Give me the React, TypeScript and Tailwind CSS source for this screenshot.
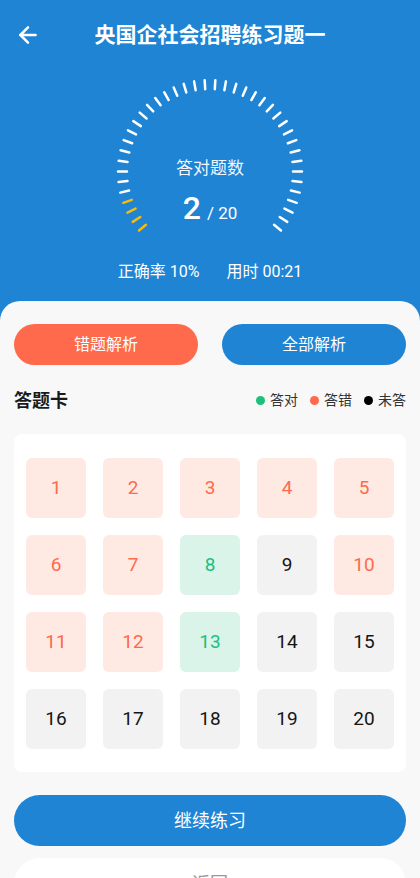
import { ArrowLeft } from 'lucide-react';

type CellState = 'wrong' | 'right' | 'none';

const cells: CellState[] = [
  'wrong', 'wrong', 'wrong', 'wrong', 'wrong',
  'wrong', 'wrong', 'right', 'none', 'wrong',
  'wrong', 'wrong', 'right', 'none', 'none',
  'none', 'none', 'none', 'none', 'none',
];

const cellStyle: Record<CellState, string> = {
  wrong: 'bg-[#fee9e3] text-[#ff6a4c]',
  right: 'bg-[#daf4ea] text-[#1cc07c]',
  none: 'bg-[#f2f2f2] text-[#151515]',
};

const Gauge = () => {
  const count = 40;
  const start = -129.5;
  const end = 129.5;
  const step = (end - start) / (count - 1);
  const cx = 100;
  const cy = 100;
  const ticks = Array.from({ length: count }, (_, i) => {
    const a = ((start + step * i) * Math.PI) / 180;
    const r1 = 83;
    const r2 = 92;
    return {
      x1: cx + r1 * Math.sin(a),
      y1: cy - r1 * Math.cos(a),
      x2: cx + r2 * Math.sin(a),
      y2: cy - r2 * Math.cos(a),
      on: i < 4,
    };
  });

  return (
    <div className="relative w-[200px] h-[170px] mx-auto">
      <svg width="200" height="170" viewBox="0 0 200 170">
        {ticks.map((t, i) => (
          <line
            key={i}
            x1={t.x1}
            y1={t.y1}
            x2={t.x2}
            y2={t.y2}
            stroke={t.on ? '#f6bb0c' : '#ffffff'}
            strokeWidth="2.5"
            strokeLinecap="round"
          />
        ))}
      </svg>
      <div className="absolute left-0 right-0 top-[85px] text-center text-[17px] leading-[22px] text-white/95">
        答对题数
      </div>
      <div className="absolute left-0 right-0 top-[118px] flex items-baseline justify-center text-white">
        <span className="text-[32px] leading-[36px] font-medium">2</span>
        <span className="text-[17px] ml-[6px]">/ 20</span>
      </div>
    </div>
  );
};

export default function App() {
  return (
    <div
      className="min-h-screen bg-[#1f84d4]"
      style={{ fontFamily: 'Roboto, "Noto Sans CJK SC", sans-serif' }}
    >
      <header className="relative h-[72px] flex items-center justify-center">
        <button className="absolute left-[15px] top-[22px] text-white">
          <ArrowLeft size={26} strokeWidth={2.3} />
        </button>
        <h1 className="text-[21px] font-bold text-white">央国企社会招聘练习题一</h1>
      </header>

      <Gauge />

      <div className="mt-[19px] pb-[18px] flex justify-center gap-[27px] text-[16px] leading-[22px] text-white">
        <span>正确率 10%</span>
        <span>用时 00:21</span>
      </div>

      <main className="bg-[#f8f8f8] rounded-t-[20px] px-[14px] pt-[23px] pb-[20px]">
        <div className="flex gap-[24px]">
          <button className="flex-1 h-[41px] rounded-full bg-[#ff6a4c] text-white text-[16px]">
            错题解析
          </button>
          <button className="flex-1 h-[41px] rounded-full bg-[#1f84d4] text-white text-[16px]">
            全部解析
          </button>
        </div>

        <div className="mt-[23px] h-[24px] flex items-center justify-between">
          <h2 className="text-[18px] font-bold text-[#1a1a1a]">答题卡</h2>
          <div className="flex items-center text-[14px] text-[#333]">
            <span className="w-[9px] h-[9px] rounded-full bg-[#1cc07c]" />
            <span className="ml-[5px]">答对</span>
            <span className="ml-[12px] w-[9px] h-[9px] rounded-full bg-[#ff6a4c]" />
            <span className="ml-[5px]">答错</span>
            <span className="ml-[12px] w-[9px] h-[9px] rounded-full bg-black" />
            <span className="ml-[5px]">未答</span>
          </div>
        </div>

        <div className="mt-[22px] bg-white rounded-[8px] px-[12px] pt-[24px] pb-[23px] grid grid-cols-5 gap-[17px]">
          {cells.map((s, i) => (
            <div
              key={i}
              className={`h-[60px] rounded-[6px] flex items-center justify-center text-[19px] ${cellStyle[s]}`}
            >
              {i + 1}
            </div>
          ))}
        </div>

        <button className="mt-[23px] w-full h-[51px] rounded-full bg-[#1f84d4] text-white text-[18px]">
          继续练习
        </button>
        <button className="mt-[12px] w-full h-[51px] rounded-full bg-white text-[#999] text-[18px]">
          返回
        </button>
      </main>
    </div>
  );
}
